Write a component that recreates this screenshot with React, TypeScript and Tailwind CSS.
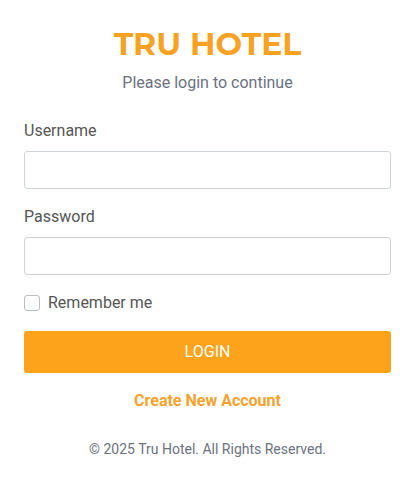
export default function App() {
  return (
    <div className="min-h-[484px] bg-white font-['Roboto',sans-serif]">
      <div className="ml-6 w-[367px] pt-[26px]">
        <h1 className="text-center font-['Montserrat','Lato','Open_Sans',sans-serif] text-[31.5px] font-bold leading-[36px] text-[#f9a123]">
          TRU HOTEL
        </h1>
        <p className="mt-[9px] text-center text-[16px] leading-[24px] text-[#6b7280]">
          Please login to continue
        </p>

        <form className="mt-[24px] flex flex-col">
          <label className="text-[16px] leading-[24px] text-[#555]">Username</label>
          <input
            type="text"
            className="mt-[8px] h-[38px] w-full rounded-[3px] border border-[#ced4da] bg-white px-3 outline-none"
          />

          <label className="mt-[16px] text-[16px] leading-[24px] text-[#555]">Password</label>
          <input
            type="password"
            className="mt-[8px] h-[38px] w-full rounded-[3px] border border-[#ced4da] bg-white px-3 outline-none"
          />

          <label className="mt-[16px] flex items-center gap-[8px] text-[16px] leading-[24px] text-[#555]">
            <span className="h-[16px] w-[16px] rounded-[3px] border border-[#b9bec4] bg-white" />
            Remember me
          </label>

          <button
            type="button"
            className="mt-[16px] h-[42px] w-full rounded-[3px] bg-[#fda21b] text-[16px] text-white"
          >
            LOGIN
          </button>
        </form>

        <p className="mt-[16px] text-center text-[16px] font-bold leading-[24px] text-[#f7a12e]">
          Create New Account
        </p>

        <p className="mt-[26px] text-center text-[14px] leading-[20px] text-[#6b7280]">
          © 2025 Tru Hotel. All Rights Reserved.
        </p>
      </div>
    </div>
  );
}
